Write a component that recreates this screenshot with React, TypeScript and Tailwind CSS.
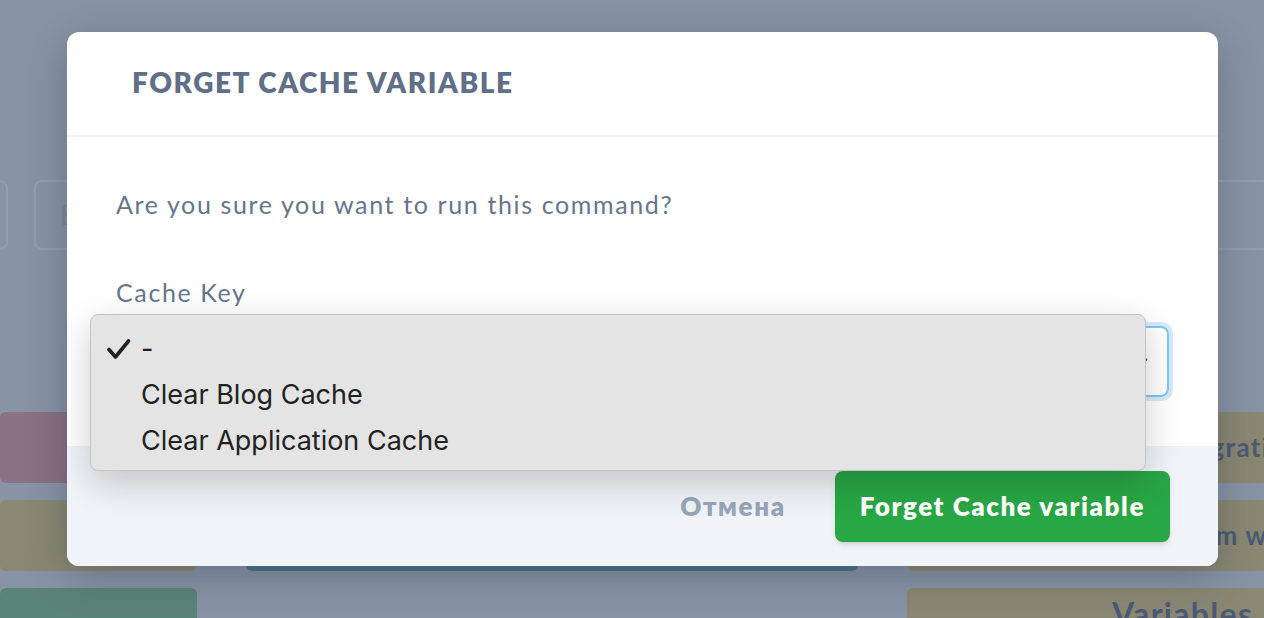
import { ChevronDown } from "lucide-react";

interface BgCardProps {
  color: string;
  className?: string;
  children?: React.ReactNode;
}

function BgCard({ color, className, children }: BgCardProps) {
  return <div className={`rounded-md ${color} ${className ?? ""}`}>{children}</div>;
}

function CheckMark() {
  return (
    <svg width="24" height="22" viewBox="0 0 24 22" className="shrink-0">
      <path d="M2 11.5 L8.5 19 L21.5 3" fill="none" stroke="#222222" strokeWidth="3.6" strokeLinecap="round" strokeLinejoin="round" />
    </svg>
  );
}

export default function App() {
  const options = [
    { label: "-", checked: true },
    { label: "Clear Blog Cache", checked: false },
    { label: "Clear Application Cache", checked: false },
  ];

  return (
    <div className="relative h-[618px] w-[1264px] overflow-hidden bg-[#8893a5] font-['Lato',sans-serif]">
      {/* dimmed page behind the modal */}
      <div className="pt-[180px]">
        <div className="-ml-[200px] flex gap-[26px]">
          <div className="h-[70px] w-[208px] shrink-0 rounded-lg border-2 border-[#939eb0]" />
          <div className="flex h-[70px] w-[600px] shrink-0 items-center rounded-lg border-2 border-[#939eb0] px-6 text-[26px] text-[#7d889b]">
            Email
          </div>
          <div className="h-[70px] w-[700px] shrink-0 rounded-lg border-2 border-[#939eb0]" />
        </div>

        <div className="mt-[162px] grid grid-cols-[197px_612px_690px] grid-rows-[71px_71px_71px] gap-x-[49px] gap-y-[17px] text-[26px] font-bold tracking-[0.05em] text-[#4d5a75]">
          <BgCard color="bg-[#8a7185]" />
          <BgCard color="bg-[#4f7389]" className="row-span-2" />
          <BgCard color="bg-[#8a8772]" className="flex items-center pl-[270px]">
            Migrations
          </BgCard>
          <BgCard color="bg-[#8a8772]" />
          <BgCard color="bg-[#8a8772]" className="flex items-center pl-[240px]">
            System wide
          </BgCard>
          <BgCard color="bg-[#5b8478]" className="pl-[12px] pt-[20px] text-[#9aa4b6]">
            Logs
          </BgCard>
          <div />
          <BgCard color="bg-[#8a8772]" className="pl-[205px] pt-[2px] text-[32px]">
            Variables
          </BgCard>
        </div>
      </div>

      {/* modal */}
      <div className="absolute left-[67px] top-[32px] flex h-[534px] w-[1151px] flex-col overflow-hidden rounded-xl bg-white shadow-[0_10px_40px_rgba(30,40,60,0.3)]">
        <div className="flex h-[105px] shrink-0 items-center border-b-2 border-[#eef2f6] pb-[3px] pl-[65px]">
          <h2 className="text-[28px] font-extrabold uppercase tracking-[0.055em] text-[#5f6f88]">Forget Cache Variable</h2>
        </div>

        <div className="flex-1 px-[49px] pt-[49px] text-[25px] leading-[1.5] tracking-[0.065em] text-[#66758d]">
          <p>Are you sure you want to run this command?</p>
          <p className="mt-[50px]">Cache Key</p>
          <div className="mt-[15px] flex h-[71px] items-center justify-end rounded-lg border-2 border-[#7cc8f5] pr-[16px] ring-4 ring-[#d6ebfa]">
            <ChevronDown className="h-5 w-5 text-[#3f4a5c]" strokeWidth={3} />
          </div>
        </div>

        <div className="flex h-[120px] shrink-0 items-center justify-end gap-[49px] bg-[#f0f4f8] pr-[48px] text-[26px] font-extrabold tracking-[0.06em]">
          <button className="text-[#97a5b9]">Отмена</button>
          <button className="flex h-[71px] items-center rounded-lg bg-[#28a745] px-[25px] text-white shadow-md">
            Forget Cache variable
          </button>
        </div>
      </div>

      {/* native select popup */}
      <div className="absolute left-[90px] top-[314px] h-[157px] w-[1056px] rounded-lg border border-[#c4c4c4] bg-[#e4e4e4] pt-[11px] font-['Inter',sans-serif] text-[27px] text-[#222222] shadow-[0_12px_36px_rgba(0,0,0,0.2)]">
        {options.map((o) => (
          <div key={o.label} className="flex h-[46px] items-center">
            <div className="flex w-[50px] pl-[16px]">{o.checked && <CheckMark />}</div>
            <span>{o.label}</span>
          </div>
        ))}
      </div>
    </div>
  );
}
